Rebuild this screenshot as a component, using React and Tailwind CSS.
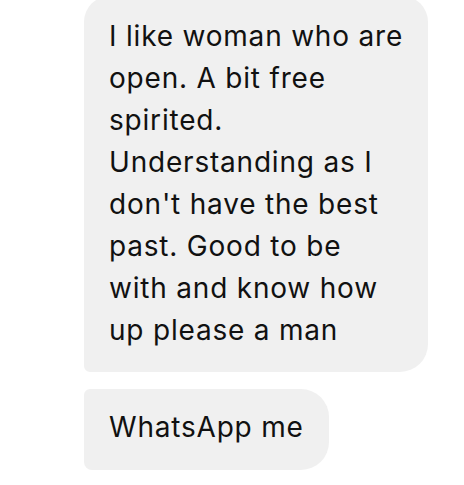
export default function App() {
  const lines = [
    "I like woman who are",
    "open. A bit free",
    "spirited.",
    "Understanding as I",
    "don't have the best",
    "past. Good to be",
    "with and know how",
    "up please a man",
  ];

  return (
    <div
      className="w-[464px] h-[485px] overflow-hidden bg-white pl-[84px]"
      style={{ fontFamily: "Inter, 'Liberation Sans', sans-serif" }}
    >
      <div className="flex flex-col items-start gap-[17px] -mt-[4px]">
        {/* long message */}
        <div className="w-[344px] bg-[#f0f0f0] rounded-tl-[26px] rounded-tr-[26px] rounded-br-[28px] rounded-bl-[6px] pl-[25px] pr-[20px] pt-[19px] pb-[21px] text-[28px] leading-[42px] tracking-[0.8px] text-[#111]">
          {lines.map((l, i) => (
            <div key={i} className="whitespace-nowrap">
              {l}
            </div>
          ))}
        </div>

        {/* short message */}
        <div className="bg-[#f0f0f0] rounded-tl-[6px] rounded-tr-[28px] rounded-br-[28px] rounded-bl-[8px] pl-[25px] pr-[25px] pt-[17px] pb-[21px] text-[28px] leading-[43px] tracking-[0.8px] text-[#111]">
          WhatsApp me
        </div>
      </div>
    </div>
  );
}
